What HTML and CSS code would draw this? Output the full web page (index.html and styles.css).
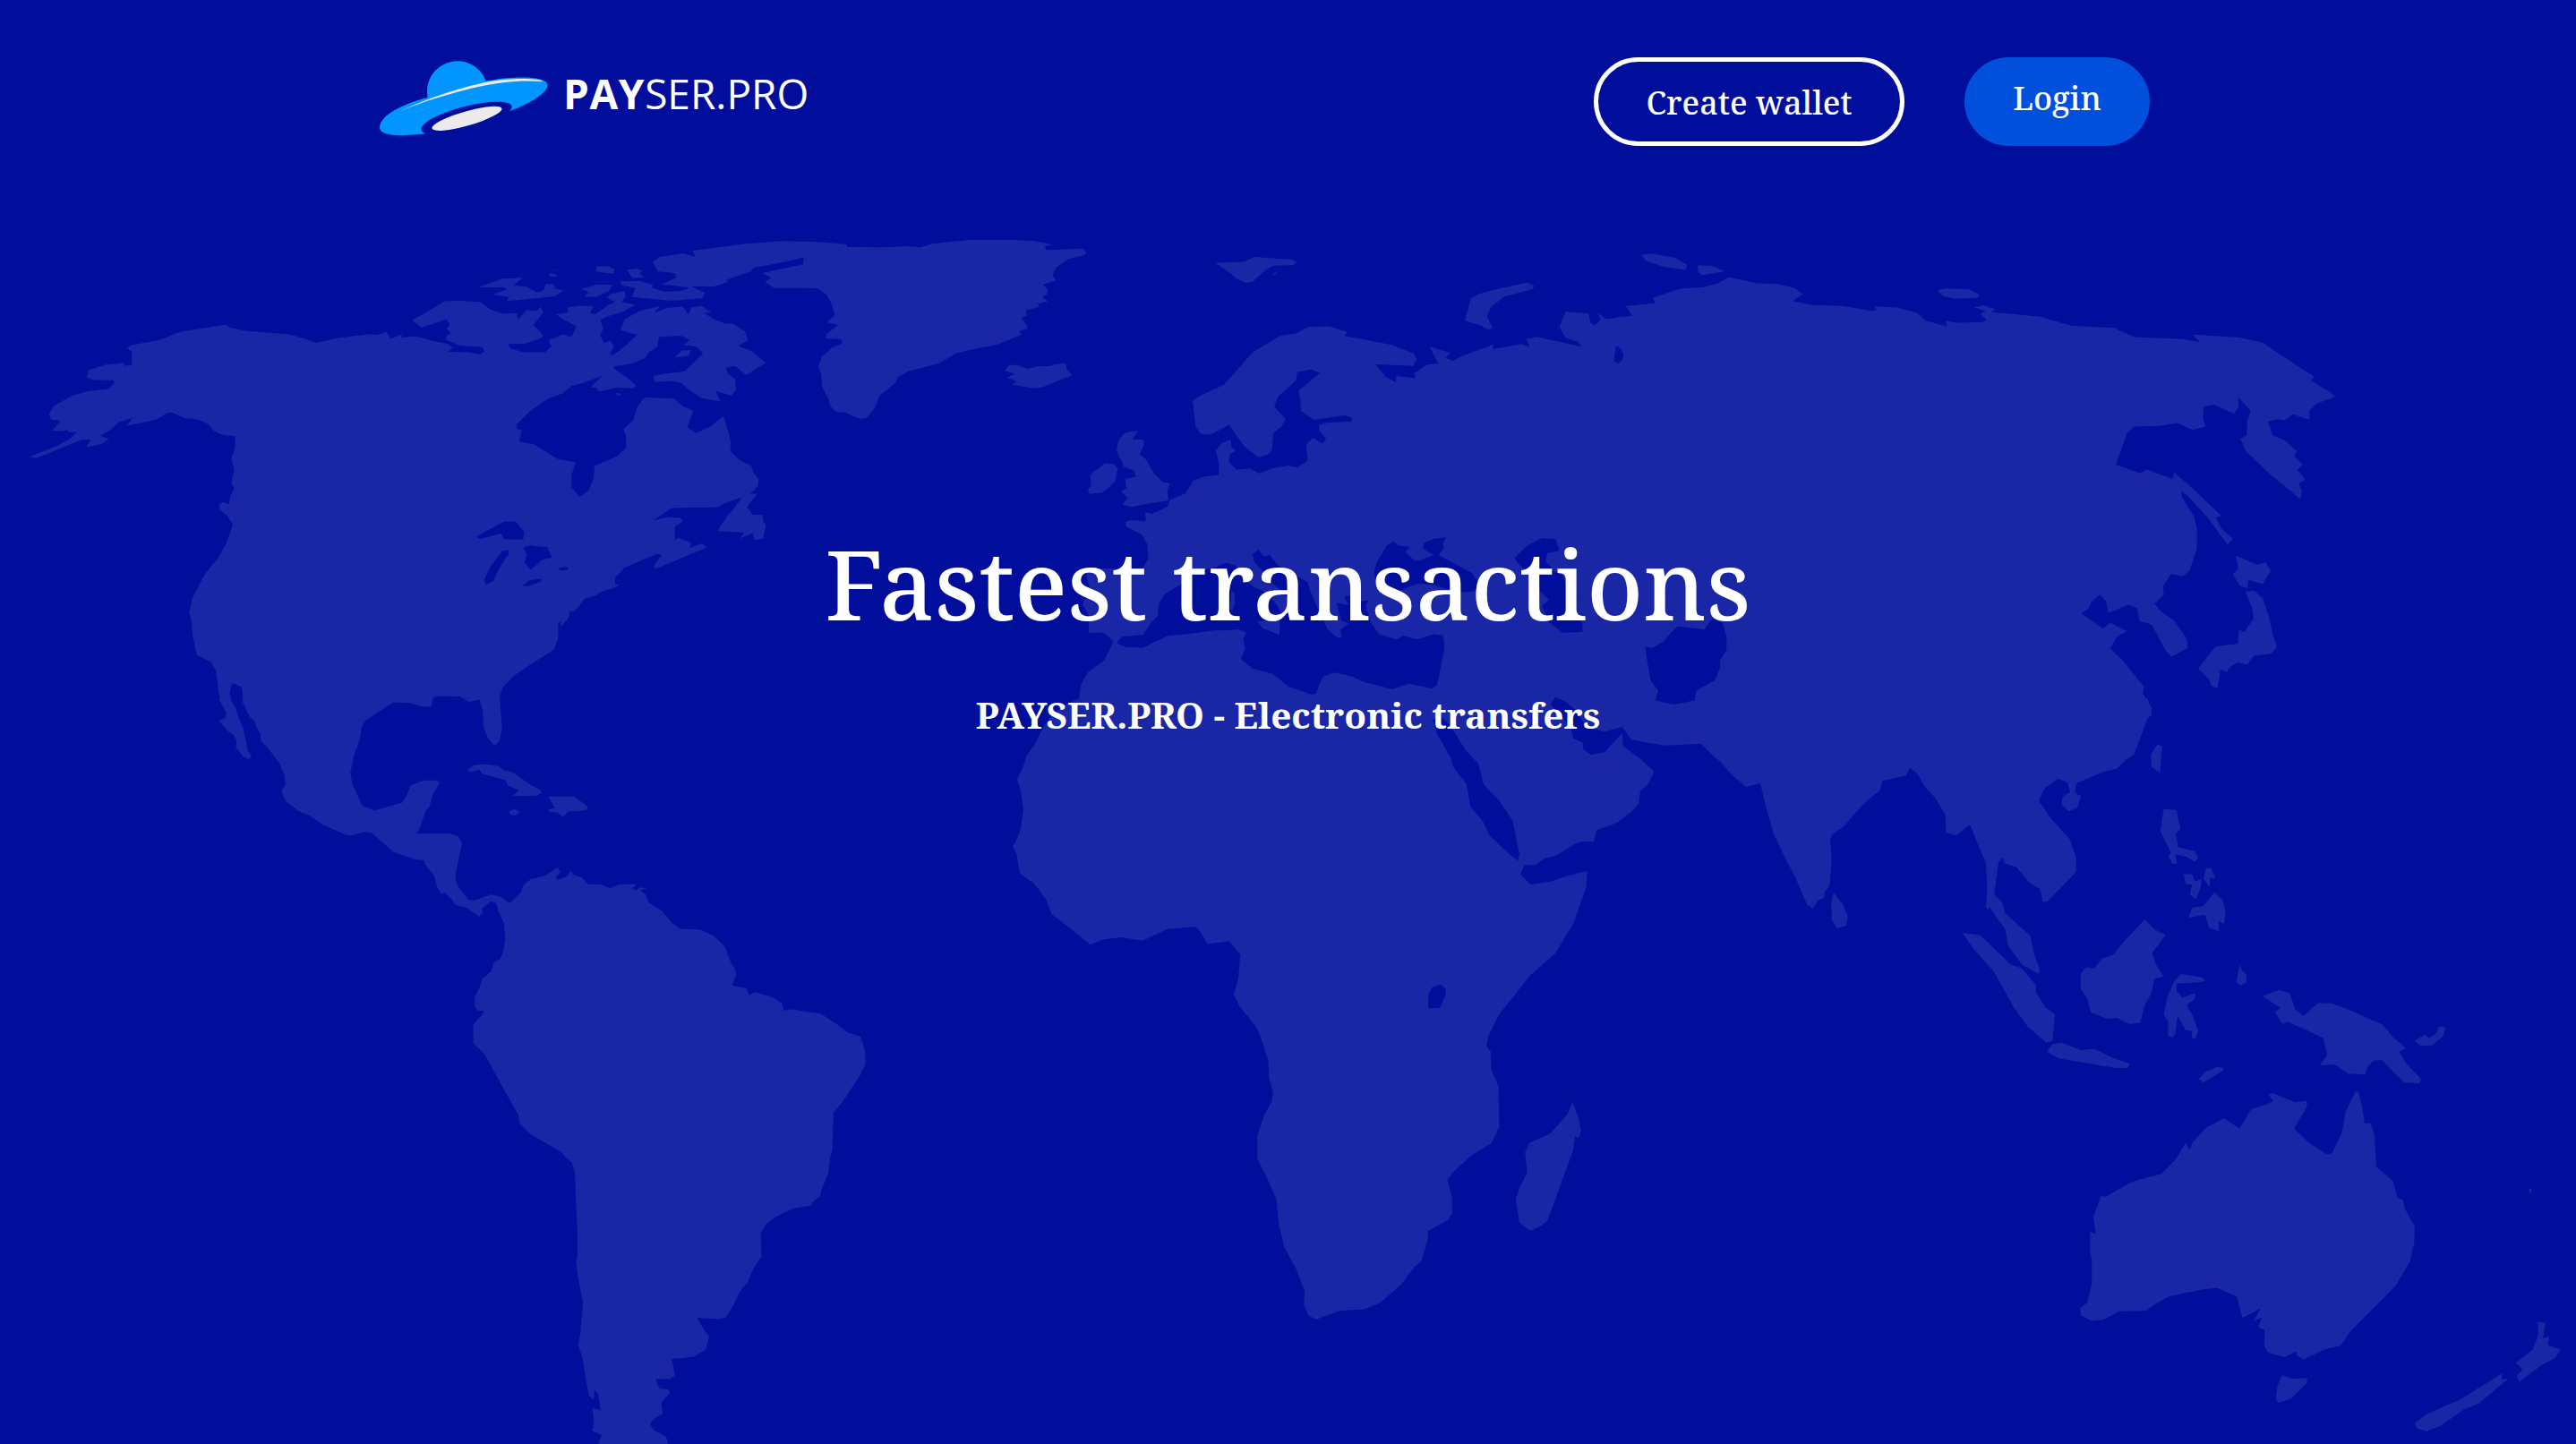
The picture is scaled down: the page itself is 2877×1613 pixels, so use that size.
FILE: index.html
```html
<!DOCTYPE html>
<html lang="en">
<head>
<meta charset="utf-8">
<title>PAYSER.PRO</title>
<link rel="stylesheet" href="styles.css">
</head>
<body>
<div class="page">
<svg class="map" viewBox="0 0 2877 1613" aria-hidden="true">
<!-- North America -->
<g class="land" transform="matrix(0.57398 0 0 0.382653 0 240)">
<path d="M473,1430 472,1395 470,1378 455,1368 450,1372 447,1400 452,1430 431,1430 425,1390 420,1330 410,1305 383,1285 375,1230 372,1180 368,1160 374,1120 388,1080 398,1050 425,1000 440,960 453,905 443,880 427,860 427,845 433,838 446,844 448,820 456,798 450,782 456,745 450,712 457,680 458,647 430,641 416,630 405,610 385,597 360,594 335,577 325,578 305,597 247,616 258,592 230,606 215,628 195,645 212,654 200,668 168,679 176,656 160,656 70,711 58,706 75,695 110,675 135,655 150,633 135,635 130,628 122,631 101,630 118,601 100,598 95,583 105,557 140,528 170,515 210,508 223,492 220,483 180,482 169,475 172,453 205,438 240,432 243,441 257,437 256,400 247,388 257,380 310,365 350,342 410,327 438,320 450,330 480,339 560,348 590,360 615,374 660,359 720,348 733,350 752,342 760,361 783,349 780,358 810,354 840,367 872,377 882,387 872,399 910,401 935,407 943,398 938,386 895,382 868,365 868,355 877,345 869,333 875,318 868,306 820,329 802,308 855,262 865,252 895,250 935,255 955,277 980,289 1005,287 1008,305 1025,278 1045,280 1052,268 1057,285 1038,322 1058,352 1050,362 1020,376 988,377 993,390 1020,401 1060,401 1073,384 1068,365 1095,349 1112,357 1122,325 1095,305 1082,290 1105,285 1105,270 1130,265 1155,268 1148,286 1158,290 1185,262 1197,254 1181,242 1190,230 1215,222 1218,238 1210,255 1237,262 1212,283 1180,297 1168,308 1174,330 1168,352 1175,374 1188,368 1195,385 1187,403 1192,410 1215,385 1240,350 1207,336 1215,305 1245,280 1285,266 1272,287 1297,272 1328,268 1340,291 1345,270 1365,266 1385,285 1370,287 1390,305 1412,318 1425,317 1450,340 1455,368 1436,382 1465,400 1490,432 1452,468 1430,441 1412,447 1416,462 1430,480 1432,510 1423,528 1392,513 1402,545 1365,535 1340,510 1325,490 1305,485 1275,488 1270,472 1290,464 1332,457 1368,405 1355,385 1330,380 1342,365 1325,353 1282,357 1280,385 1262,402 1255,418 1230,434 1193,443 1200,455 1227,483 1238,500 1230,507 1202,504 1165,516 1160,505 1149,503 1174,468 1140,488 1112,500 1095,521 1065,538 1030,575 1005,612 1005,623 1015,630 1010,662 1040,670 1085,713 1120,722 1112,760 1112,795 1128,823 1145,805 1155,770 1157,733 1200,705 1218,680 1218,645 1213,625 1232,600 1240,560 1255,533 1310,536 1330,560 1349,571 1338,620 1354,637 1380,620 1408,587 1422,660 1421,690 1440,717 1462,733 1466,753 1476,770 1475,790 1460,815 1474,814 1453,853 1465,875 1484,876 1485,895 1490,905 1485,945 1468,950 1464,930 1440,945 1448,928 1396,923 1405,900 1444,825 1415,838 1395,854 1307,856 1272,892 1300,882 1325,885 1328,895 1313,910 1313,948 1320,943 1345,958 1342,972 1366,959 1375,971 1275,1034 1272,1025 1288,992 1278,990 1215,1030 1197,1060 1197,1080 1204,1078 1200,1086 1170,1100 1160,1110 1137,1121 1125,1145 1113,1160 1109,1155 1107,1175 1090,1206 1092,1186 1086,1195 1086,1235 1078,1270 1040,1305 1000,1345 978,1380 972,1410 977,1500 972,1535 963,1550 950,1530 940,1490 940,1450 933,1415 912,1422 895,1406 850,1405 840,1412 840,1433 825,1436 795,1424 765,1423 750,1432Z"/>
<path d="M932,212 975,187 1018,183 1000,205 1025,210 1045,226 1057,220 1062,202 1078,203 1080,216 1096,220 1080,238 985,252 990,240 958,233 985,219 982,212ZM1067,178 1072,170 1085,175 1080,182ZM1075,165 1078,159 1081,160ZM1160,150 1185,150 1196,160 1194,172 1160,166ZM1220,160 1240,157 1250,163 1244,172 1255,182 1230,184ZM1130,217 1160,204 1192,204 1185,222 1160,240 1138,239 1145,225ZM1199,520 1208,522 1206,527 1200,526Z"/>
</g>
<!-- Greenland, Arctic islands, Iceland, Ireland -->
<g class="land" transform="matrix(0.382653 0 0 0.333333 700 240)">
<path d="M180,243 102,233 145,210 140,195 90,190 75,157 95,142 165,129 200,140 192,120 350,97 450,88 550,90 640,98 645,108 750,109 820,105 857,109 890,97 1000,84 1130,84 1190,88 1245,100 1220,105 1225,118 1330,113 1342,126 1335,134 1290,148 1255,175 1242,200 1252,220 1215,233 1228,250 1226,268 1213,275 1228,290 1200,298 1205,308 1165,320 1168,338 1150,345 1165,365 1170,380 1145,390 1152,402 1080,435 1000,453 960,465 910,498 820,525 790,545 785,562 737,607 725,645 700,680 683,684 660,675 640,662 610,660 593,640 590,620 570,575 568,535 559,510 570,475 600,445 630,430 625,417 582,414 582,400 617,370 585,360 608,335 595,290 580,265 555,246 430,245 403,224 423,212 395,195 515,166 516,143 440,163 370,177 362,190 290,218 297,224 255,240 190,240 228,262 220,280 130,288 15,275 25,245 -15,236 -19,222 40,222 75,233 75,245 110,257 160,255 180,246Z"/>
<path d="M140,478 160,455 187,453 180,472ZM1103,521 1115,503 1138,503 1170,516 1200,507 1235,507 1250,500 1283,498 1283,515 1300,538 1215,577 1190,581 1125,570 1138,558 1110,545 1132,533ZM1346,925 1355,905 1353,870 1395,833 1420,835 1433,850 1425,895 1390,930 1350,935Z"/>
</g>
<!-- Mexico and Central America -->
<g class="land" transform="matrix(0.333333 0 0 0.333333 200 780)">
<path d="M213,0 225,40 238,65 252,75 258,95 273,120 273,140 300,170 335,215 352,255 356,290 343,312 358,345 400,378 435,392 485,425 560,458 580,460 620,448 645,451 715,513 790,540 822,543 822,553 855,595 865,635 880,656 890,652 915,675 925,692 965,703 1005,731 1017,722 1015,705 1045,680 1065,688 1070,715 1088,752 1200,752 1200,603 1160,620 1145,650 1108,686 1075,665 1045,658 990,677 970,675 935,630 927,610 928,580 948,485 935,463 910,453 793,453 805,440 825,380 838,365 850,325 873,282 862,275 820,275 775,292 765,320 747,350 655,376 635,368 613,360 600,330 580,285 574,250 585,195 605,140 612,95 625,75 700,25 720,13 780,14 810,28 845,27 850,0ZM133,0 158,48 155,65 133,75 160,107 185,125 193,145 190,165 215,195 235,204 243,193 232,180 220,125 213,95 200,65 190,35 170,0Z"/>
</g>
<!-- Caribbean and South America -->
<g class="land" transform="matrix(0.446429 0 0 0.518495 400 800)">
<path d="M273,115 290,105 320,103 352,108 365,117 385,120 435,150 455,158 460,166 445,171 385,172 402,160 375,149 368,138 310,124 303,115 280,121ZM476,173 540,173 560,185 576,197 570,203 525,206 513,217 500,208 478,206 476,201 492,197Z"/>
<ellipse cx="390" cy="207" rx="12" ry="6"/>
<path d="M330,397 345,402 350,418 365,445 368,480 362,510 355,523 340,530 332,550 310,566 305,582 291,607 292,625 298,634 315,635 308,645 288,664 288,705 315,727 340,765 360,797 400,858 403,875 430,900 510,940 520,952 535,962 542,985 549,1130 548,1165 545,1175 550,1210 562,1262 556,1330 550,1353 562,1385 570,1430 578,1465 590,1473 591,1452 600,1460 607,1495 586,1490 590,1520 586,1540 610,1548 600,1568 777,1568 770,1552 740,1538 730,1525 740,1513 762,1503 758,1480 780,1457 775,1450 755,1449 743,1428 780,1428 793,1420 785,1385 840,1380 870,1365 878,1335 865,1322 848,1296 900,1299 920,1295 935,1275 955,1240 975,1218 990,1188 1009,1165 1007,1115 1020,1095 1045,1078 1090,1060 1130,1055 1142,1043 1155,1035 1160,1018 1176,985 1180,955 1186,935 1189,855 1210,833 1255,775 1269,750 1268,720 1257,690 1225,682 1200,665 1155,640 1120,637 1085,631 1065,634 1060,618 1035,605 992,594 978,601 972,587 935,580 946,557 943,545 932,530 918,497 890,473 855,460 805,458 785,445 760,420 727,401 720,385 705,375 720,371 705,369 695,375 687,370 697,362 655,362 630,371 605,362 575,362 560,348 540,342 531,333 522,345 497,353 495,346 506,335 498,326 470,343 430,352 412,366 408,380 390,400 377,402 360,390 335,385Z"/>
</g>
<!-- Europe, North Africa, Middle East -->
<g class="land" transform="matrix(0.57398 0 0 0.446429 1100 240)">
<path d="M60,1568 72,1530 75,1490 70,1435 63,1415 67,1400 75,1380 80,1355 97,1325 110,1290 125,1260 150,1230 183,1210 187,1175 200,1145 232,1115 250,1068 240,1055 230,1045 202,1046 202,1000 190,975 204,935 196,892 230,884 305,888 318,860 316,825 305,800 275,780 273,768 285,764 313,767 312,744 325,748 355,730 360,713 390,697 405,665 425,656 455,650 455,620 449,590 460,572 478,562 480,580 488,590 476,600 475,620 490,638 515,635 533,647 560,634 590,627 607,633 628,615 625,575 638,558 657,573 664,560 650,540 650,525 665,520 712,517 714,508 700,502 640,513 615,490 613,460 610,440 652,396 635,387 608,393 605,415 570,455 563,480 585,510 577,530 562,545 558,590 550,600 533,607 505,580 475,525 440,550 420,548 410,530 404,465 420,452 465,425 520,345 575,302 605,297 630,280 670,279 705,293 700,303 790,325 835,347 840,362 833,378 760,374 780,405 800,420 800,403 838,409 835,397 860,375 882,372 865,330 905,345 897,358 910,365 930,352 990,324 988,336 1045,323 1060,331 1053,310 1075,305 1160,330 1155,318 1130,308 1118,280 1130,242 1175,247 1178,270 1187,277 1198,262 1191,244 1215,266 1225,257 1260,253 1247,228 1305,222 1300,207 1360,184 1395,182 1430,170 1450,156 1480,165 1500,171 1568,180 1568,1568 1545,1568 1525,1500 1509,1421 1482,1431 1455,1400 1452,1385 1415,1350 1400,1323 1320,1328 1258,1313 1240,1282 1205,1293 1170,1280 1150,1240 1130,1218 1110,1207 1100,1225 1120,1250 1140,1285 1145,1310 1163,1320 1165,1338 1180,1351 1205,1345 1240,1297 1242,1330 1275,1360 1302,1393 1290,1425 1275,1440 1272,1470 1255,1495 1232,1520 1190,1540 1185,1568Z"/>
<path d="M273,545 298,540 287,562 308,562 310,575 301,600 312,610 328,645 345,668 360,672 355,690 357,715 320,722 285,731 268,725 278,707 264,692 275,685 273,660 294,655 290,640 270,630 265,610 262,612 256,585 262,560ZM934,265 945,210 960,198 1000,185 1055,169 1069,178 1065,186 1010,205 985,230 977,255 988,283 980,288 965,277ZM448,120 505,117 525,105 600,112 607,120 600,126 560,127 540,145 520,168 508,170 490,160 480,148ZM559,150 568,141 566,149Z"/>
</g>
<!-- Africa, Arabia, Madagascar -->
<g class="land" transform="matrix(0.57398 0 0 0.510204 1100 700)">
<path d="M125,225 104,250 97,270 77,300 75,315 63,335 70,360 75,400 70,440 63,468 54,480 62,500 68,540 95,562 118,595 130,630 160,655 205,697 230,685 265,680 307,688 355,662 410,657 422,672 432,695 475,689 497,718 493,770 484,805 495,830 530,880 540,910 551,950 553,990 561,1020 558,1040 543,1070 530,1115 530,1165 550,1210 567,1253 572,1310 583,1360 605,1405 622,1455 621,1485 630,1508 644,1517 690,1498 740,1494 770,1480 810,1440 835,1403 850,1387 862,1340 862,1323 900,1300 909,1285 909,1250 900,1210 915,1190 950,1155 985,1132 1001,1095 999,1005 985,970 984,930 976,918 980,895 1000,850 1060,765 1110,715 1145,650 1170,570 1172,535 1135,545 1100,558 1062,565 1042,542 1050,522 1070,522 1090,507 1110,502 1150,475 1187,460 1190,443 1230,427 1240,413 1255,408 1272,388 1275,360 1290,345 1301,320 1240,320 1150,300 1100,225ZM1143,1040 1155,1075 1160,1105 1155,1120 1148,1115 1145,1145 1095,1300 1085,1310 1062,1323 1040,1305 1033,1255 1040,1230 1055,1195 1051,1150 1060,1130 1100,1110 1120,1085 1135,1065Z"/>
</g>
<!-- North and East Asia, Japan -->
<g class="land" transform="matrix(0.637755 0 0 0.446429 1800 240)">
<path d="M-20,262 0,260 37,253 25,229 77,222 73,207 120,185 160,182 185,172 205,156 240,170 290,173 320,183 335,198 317,216 355,226 405,228 455,240 464,238 460,229 500,232 535,245 550,265 587,279 585,265 605,270 650,268 657,262 645,248 655,240 635,232 650,226 672,236 665,243 750,255 805,277 880,283 915,306 1000,311 1030,318 1017,299 1100,307 1140,320 1230,405 1225,415 1260,445 1267,455 1235,472 1222,490 1222,513 1193,499 1178,514 1165,511 1149,518 1158,552 1180,565 1200,592 1195,602 1210,625 1201,638 1215,663 1203,672 1209,690 1206,712 1150,645 1110,590 1101,560 1112,552 1113,515 1119,490 1097,457 1098,480 1090,498 1055,475 1036,480 1036,510 1040,530 1018,538 990,521 960,528 915,530 903,545 883,625 925,646 937,637 982,661 985,645 1010,675 1068,753 1058,757 1068,785 1088,811 1079,826 1045,760 1010,705 997,691 1000,710 1020,755 1025,785 1025,835 1012,890 1000,905 980,898 965,930 967,950 951,973 960,990 985,1015 1007,1060 1009,1083 980,1106 970,1090 955,1050 945,1025 925,1017 920,985 905,975 870,996 865,965 855,951 840,968 835,985 822,997 860,1035 873,1021 903,1042 885,1055 873,1085 895,1115 932,1180 930,1198 946,1235 945,1250 938,1262 915,1350 875,1388 850,1398 815,1418 811,1445 822,1455 815,1485 800,1492 788,1475 790,1455 803,1445 798,1418 783,1410 760,1430 747,1465 765,1505 803,1568 640,1568 628,1526 600,1552 586,1545 584,1500 567,1460 540,1405 523,1383 515,1403 472,1415 465,1445 440,1475 410,1525 385,1550 382,1568 292,1568 275,1500 262,1421 235,1431 210,1400 163,1323 150,1310 -20,1250Z"/>
<path d="M52,100 70,97 110,107 132,125 130,138 90,130 60,115ZM151,126 175,127 198,141 158,151 151,140ZM570,188 585,184 625,186 645,200 640,208 600,210 580,203ZM1093,853 1130,875 1145,869 1154,891 1140,924 1115,913 1113,935 1100,928 1088,900 1097,885ZM1110,943 1125,940 1140,960 1150,1000 1158,1050 1165,1080 1155,1098 1125,1103 1113,1125 1095,1120 1080,1135 1078,1144 1066,1138 1061,1185 1050,1178 1045,1160 1027,1135 1057,1080 1097,1073 1098,1038 1108,1043 1124,1010 1122,985ZM956,1325 964,1330 960,1397 945,1380 944,1350Z"/>
</g>
<!-- South-East Asia and Oceania -->
<g class="land" transform="matrix(0.623087 0 0 0.53125 1900 780)">
<path d="M0,96 25,125 55,150 57,162 80,186 106,179 115,225 130,285 150,335 170,380 190,435 200,442 210,425 220,420 222,405 230,395 234,340 231,290 255,270 262,255 295,215 320,195 325,173 367,163 373,147 385,152 400,185 420,210 438,245 441,283 458,288 482,265 495,305 510,345 513,400 510,440 515,445 516,438 535,470 545,485 550,520 575,560 605,580 607,570 597,540 590,500 545,452 540,430 525,412 533,345 540,335 545,348 565,355 588,388 608,402 612,428 620,428 645,398 672,365 672,335 660,295 625,250 605,215 615,190 640,169 657,178 662,198 670,180 700,165 720,155 745,148 775,115 800,40 808,35 800,0 0,0Z"/>
<path d="M237,409 255,435 263,460 260,478 243,484 234,465 233,430ZM468,493 500,498 555,560 575,568 600,603 600,618 617,650 634,665 630,720 618,724 585,690 560,650 525,575 490,530ZM620,743 628,728 645,724 680,740 705,737 740,757 768,768 765,778 740,777 700,769 640,757ZM795,465 812,485 832,497 820,518 808,535 815,560 829,585 812,590 807,620 795,645 787,682 768,685 745,672 727,674 698,660 693,635 680,610 680,580 690,565 705,568 718,548 738,540 755,515ZM829,665 835,630 848,595 860,580 895,586 905,593 895,597 852,600 852,615 862,630 885,620 885,632 870,645 880,665 891,700 885,717 879,713 880,700 868,697 854,668 850,705 845,713 837,710 837,680ZM965,560 970,573 977,580 977,598 967,604 959,597ZM892,800 905,785 925,775 937,777 935,783 900,808ZM1006,627 1035,613 1055,620 1065,655 1080,668 1105,641 1130,641 1165,657 1220,685 1240,713 1264,736 1251,743 1265,770 1290,800 1288,810 1260,808 1240,785 1220,761 1205,762 1194,775 1190,791 1160,789 1135,770 1109,772 1122,750 1115,715 1080,695 1050,680 1042,685 1028,660 1038,652 1020,637ZM1278,720 1298,708 1304,715 1318,705 1322,690 1334,692 1330,710 1310,730 1290,731Z"/>
<path d="M829,233 852,235 859,275 851,285 855,313 885,322 891,335 885,344 870,333 850,328 853,348 845,348 837,332 842,325 823,280ZM865,370 880,370 885,385 897,380 895,400 886,423 876,412 880,392 868,390ZM905,358 913,356 922,378 912,378 912,397 900,380ZM920,408 935,425 940,450 937,475 928,468 928,490 910,482 903,455 873,462 880,440 900,437Z"/>
<path d="M1017,832 1025,830 1065,850 1085,846 1086,858 1063,905 1090,935 1120,958 1130,957 1148,915 1155,870 1172,828 1178,828 1185,860 1189,893 1200,893 1207,920 1210,985 1240,1015 1248,1050 1258,1055 1262,1075 1279,1110 1278,1145 1270,1185 1245,1235 1165,1330 1145,1362 1120,1368 1080,1390 1068,1383 1067,1373 1045,1386 1015,1375 1009,1360 1010,1328 998,1322 1005,1302 990,1310 1002,1284 970,1303 960,1258 940,1248 925,1240 900,1243 840,1257 815,1273 798,1288 750,1289 720,1307 700,1309 680,1297 679,1283 692,1270 700,1230 700,1180 697,1165 697,1122 707,1126 703,1090 717,1046 725,1048 770,1018 800,1007 825,1000 850,970 868,935 876,950 880,935 905,903 937,883 965,905 985,865 1025,848ZM1041,1423 1060,1431 1087,1429 1085,1440 1057,1473 1035,1481 1030,1475 1033,1445ZM1500,1310 1513,1315 1509,1345 1520,1342 1518,1360 1541,1370 1530,1388 1505,1403 1467,1437 1461,1425 1472,1412 1460,1397 1490,1370 1500,1340ZM1278,1525 1300,1505 1360,1475 1435,1420 1435,1432 1447,1430 1395,1482 1365,1497 1325,1530 1300,1541 1283,1535ZM1483,1033 1486,1029 1489,1035 1486,1041Z"/>
</g>
<!-- Great Lakes -->
<g class="sea" transform="matrix(0.57398 0 0 0.382653 0 240)">
<path d="M926,940 980,896 1003,896 1020,925 1018,948 980,947 975,930 935,946ZM978,980 990,978 990,990 970,1035 960,1070 945,1080 942,1065 955,1025ZM1018,972 1030,965 1065,970 1074,1000 1055,1007 1033,1037 1021,1015 1025,990ZM1087,1030 1102,1028 1107,1036 1090,1038ZM1017,1083 1030,1067 1053,1062 1053,1070 1030,1083Z"/>
</g>
<!-- Mediterranean, Black Sea, Caspian -->
<g class="sea" transform="matrix(0.382653 0 0 0.333333 1200 560)">
<path d="M125,470 140,453 200,447 225,405 243,385 247,340 265,310 315,275 330,245 415,220 445,206 470,215 495,265 530,290 555,303 590,345 605,385 620,375 640,350 600,295 560,260 548,230 525,205 520,178 538,162 552,185 570,180 595,215 640,245 680,270 690,305 712,365 740,430 765,455 780,458 776,430 800,410 778,398 765,340 800,348 788,320 805,315 840,335 858,332 850,350 865,405 888,445 940,463 960,450 1000,463 1050,445 1076,450 1080,490 1078,500 1059,614 1044,627 976,611 928,630 841,604 811,587 759,574 726,587 714,614 706,645 691,647 624,620 579,578 519,560 486,529 498,493 493,460 501,440 481,429 440,433 410,432 330,445 275,450 235,470 200,491 150,488 127,478Z"/>
<path d="M882,205 890,190 910,150 932,133 945,148 978,153 965,170 995,200 1010,197 1050,180 1018,160 1020,140 1050,125 1085,121 1075,140 1078,158 1062,180 1160,240 1178,270 1170,300 1140,305 1090,295 1050,280 1000,275 950,300 910,300 880,275 875,235ZM1285,190 1320,150 1365,123 1405,127 1415,165 1380,175 1375,200 1400,235 1425,250 1445,310 1465,330 1460,360 1482,410 1483,438 1425,440 1385,405 1365,350 1385,330 1358,300 1350,250 1300,215Z"/>
<path class="isle" d="M458,300 466,305 469,340 460,370 454,360ZM533,402 600,395 598,448 550,425Z"/>
</g>
<g class="sea" transform="matrix(0.57398 0 0 0.446429 1100 240)">
<path d="M1285,1080 1298,1084 1320,1068 1335,1045 1348,1030 1400,1037 1415,1010 1435,1020 1443,1055 1443,1090 1430,1115 1430,1135 1420,1165 1385,1190 1380,1215 1340,1225 1305,1215 1310,1190 1295,1165 1288,1110ZM1228,328 1237,334 1243,350 1240,364 1232,372 1224,365Z"/>
</g>
<!-- Red Sea and Lake Victoria -->
<g class="sea" transform="matrix(0.57398 0 0 0.510204 1100 700)">
<path d="M872,205 885,195 905,215 935,270 960,300 970,345 1000,380 1027,425 1040,500 1037,512 1020,498 983,458 968,425 945,395 937,345 910,305 908,290 880,235ZM863,835 863,805 870,790 888,783 897,795 897,805 885,835Z"/>
</g>
</svg>
<header class="header">
<a class="logo">
<svg class="logo-mark" viewBox="70 82 546 252" preserveAspectRatio="none" aria-hidden="true">
<path fill="#0095ff" d="M225,212 L224,185 C224,129 268,83 323,83 C366,83 403,112 416,153 Q350,165 225,212Z"/>
<path fill="#0095ff" d="M70,305 C72,262 150,225 225,205 C310,172 400,150 430,147 C500,135 612,130 615,163 C614,190 560,225 490,251 C520,222 470,214 410,222 C310,235 195,285 206,315 Q210,323 222,325 C150,335 70,338 70,305Z"/>
<path fill="#ebebeb" d="M132,252 C230,205 330,172 415,153 C500,138 590,140 600,152 C540,146 470,150 380,171 C300,190 200,222 132,252Z"/>
<ellipse cx="353" cy="275" rx="118" ry="24" fill="#ebebeb" transform="rotate(-16.5 353 275)"/>
</svg>
<span class="logo-text"><b class="logo-bold">PAY</b>SER.PRO</span>
</a>
<nav class="actions">
<a class="btn btn-outline">Create wallet</a>
<a class="btn btn-solid">Login</a>
</nav>
</header>
<main class="hero">
<h1 class="title">Fastest transactions</h1>
<p class="subtitle">PAYSER.PRO - Electronic transfers</p>
</main>
</div>
</body>
</html>
```
FILE: styles.css
```css
* { box-sizing: border-box; }
body { margin: 0; background: #000e9b; color: #fff; font-family: "Noto Serif", "Droid Serif", serif; }
.page { position: relative; height: 1613px; overflow: hidden; }
.map { position: absolute; inset: 0; width: 100%; height: 100%; z-index: -1; }
.land, .isle { fill: #1926a5; }
.sea { fill: #000e9b; }
.header { display: flex; justify-content: space-between; align-items: flex-start; padding: 64px 476px 0 424px; height: 164px; }
.logo { display: flex; padding-top: 4px; }
.logo-mark { width: 188px; height: 84px; }
.logo-text { margin: 5px 0 0 17px; white-space: nowrap; font: 400 46px/63px "Open Sans", "Noto Sans", sans-serif; }
.logo-bold { font-weight: 700; letter-spacing: 0.6px; }
.actions { display: flex; gap: 67px; }
.btn { height: 99px; border-radius: 50px; font-size: 36px; font-weight: 500; line-height: 49px; white-space: nowrap; text-align: center; }
.btn-outline { width: 347px; border: 5px solid #fff; padding-top: 21px; }
.btn-solid { width: 207px; background: #0050dc; padding-top: 21px; }
.hero { text-align: center; padding-top: 414px; }
.title { margin: 0; font-size: 108px; line-height: 147px; font-weight: 500; }
.subtitle { margin: 0; padding-top: 46px; font-size: 40.5px; line-height: 56px; font-weight: 700; }
```
